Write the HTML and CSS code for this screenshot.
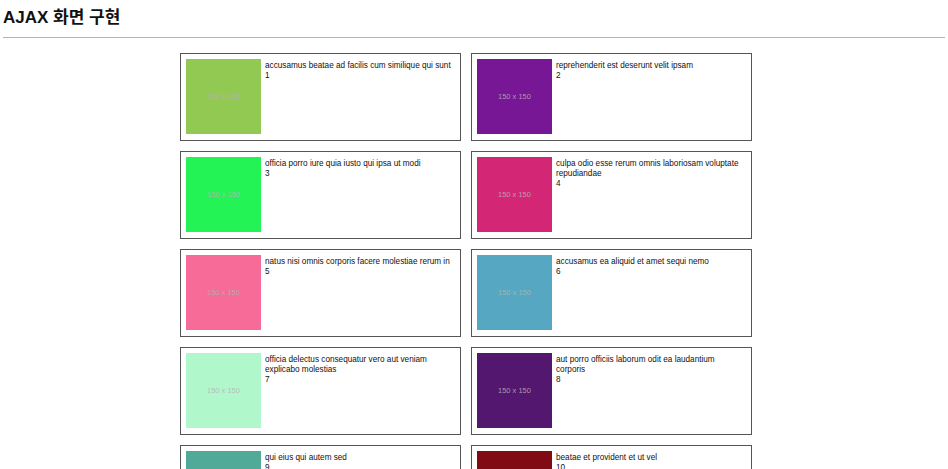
FILE: index.html
```html
<!DOCTYPE html>
<html lang="ko">
  <head>
    <meta charset="UTF-8" />
    <meta name="viewport" content="width=device-width, initial-scale=1.0" />
    <title>AJAX 화면 구현</title>
    <link rel="stylesheet" href="styles.css">
  </head>
  <body>
    <h1 class="page-title">AJAX 화면 구현</h1>
    <hr class="divider" />

    <ul class="photo-list">
      <li class="photo-card">
        <div class="thumb" style="background: #92c952">150 x 150</div>
        <div class="info">
          <p class="title">accusamus beatae ad facilis cum similique qui sunt</p>
          <p class="id">1</p>
        </div>
      </li>
      <li class="photo-card">
        <div class="thumb" style="background: #771796">150 x 150</div>
        <div class="info">
          <p class="title">reprehenderit est deserunt velit ipsam</p>
          <p class="id">2</p>
        </div>
      </li>
      <li class="photo-card">
        <div class="thumb" style="background: #24f355">150 x 150</div>
        <div class="info">
          <p class="title">officia porro iure quia iusto qui ipsa ut modi</p>
          <p class="id">3</p>
        </div>
      </li>
      <li class="photo-card">
        <div class="thumb" style="background: #d32776">150 x 150</div>
        <div class="info">
          <p class="title">culpa odio esse rerum omnis laboriosam voluptate repudiandae</p>
          <p class="id">4</p>
        </div>
      </li>
      <li class="photo-card">
        <div class="thumb" style="background: #f66b97">150 x 150</div>
        <div class="info">
          <p class="title">natus nisi omnis corporis facere molestiae rerum in</p>
          <p class="id">5</p>
        </div>
      </li>
      <li class="photo-card">
        <div class="thumb" style="background: #56a8c2">150 x 150</div>
        <div class="info">
          <p class="title">accusamus ea aliquid et amet sequi nemo</p>
          <p class="id">6</p>
        </div>
      </li>
      <li class="photo-card">
        <div class="thumb" style="background: #b0f7cc">150 x 150</div>
        <div class="info">
          <p class="title">officia delectus consequatur vero aut veniam explicabo molestias</p>
          <p class="id">7</p>
        </div>
      </li>
      <li class="photo-card">
        <div class="thumb" style="background: #54176f">150 x 150</div>
        <div class="info">
          <p class="title">aut porro officiis laborum odit ea laudantium corporis</p>
          <p class="id">8</p>
        </div>
      </li>
      <li class="photo-card">
        <div class="thumb" style="background: #51aa97">150 x 150</div>
        <div class="info">
          <p class="title">qui eius qui autem sed</p>
          <p class="id">9</p>
        </div>
      </li>
      <li class="photo-card">
        <div class="thumb" style="background: #810b14">150 x 150</div>
        <div class="info">
          <p class="title">beatae et provident et ut vel</p>
          <p class="id">10</p>
        </div>
      </li>
    </ul>
  </body>
</html>
```

FILE: styles.css
```css
* {
  margin: 0;
  padding: 0;
  box-sizing: border-box;
}

body {
  font-family: "Liberation Sans", "Noto Sans CJK KR", sans-serif;
  background: white;
  margin: 3px;
  overflow: hidden;
}

.page-title {
  font-size: 17px;
  line-height: 22px;
  margin-top: 4px;
  color: #111;
}

.divider {
  border: none;
  border-top: 1px solid #b4b4b4;
  margin-top: 8px;
}

.photo-list {
  list-style-type: none;
  display: grid;
  grid-template-columns: 281px 281px;
  gap: 10px;
  margin: 15px 0 0 177px;
}

.photo-card {
  display: flex;
  gap: 4px;
  height: 88px;
  padding: 5px;
  border: 1px solid #555;
}

.thumb {
  flex: none;
  width: 75px;
  height: 75px;
  display: flex;
  align-items: center;
  justify-content: center;
  font-size: 7.5px;
  color: rgba(180, 180, 180, 0.85);
}

.info {
  font-size: 8.2px;
  line-height: 10px;
  padding-top: 1.5px;
  color: #111;
}
```
